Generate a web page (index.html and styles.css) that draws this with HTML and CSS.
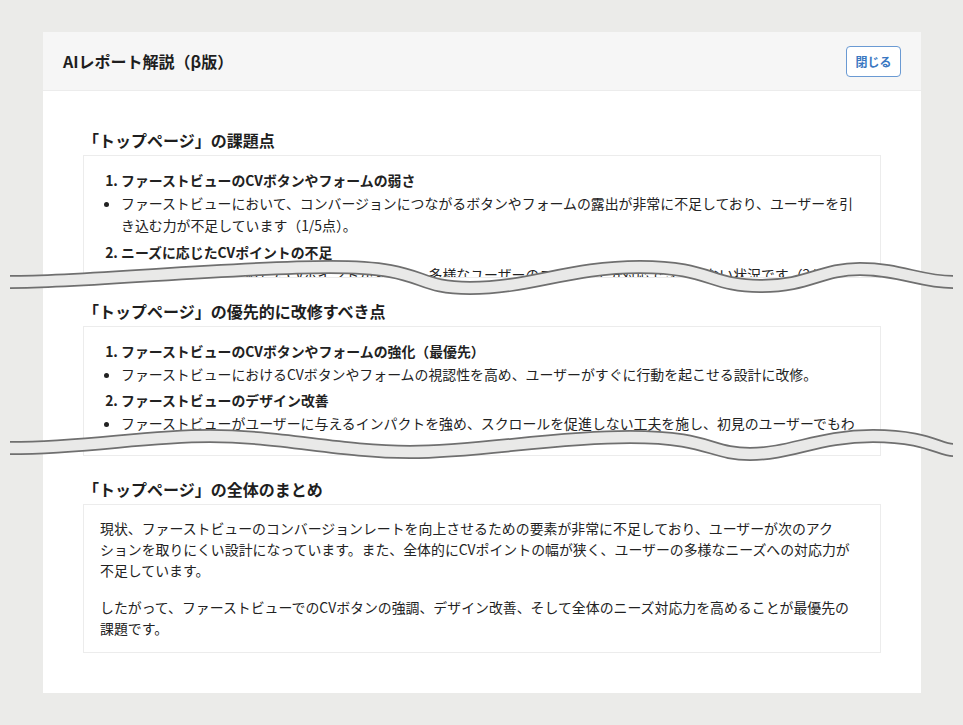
FILE: index.html
```html
<!DOCTYPE html>
<html lang="ja">
<head>
<meta charset="utf-8">
<title>AIレポート解説（β版）</title>
<link rel="stylesheet" href="styles.css">
</head>
<body>
<div class="page">
  <div class="card">
    <div class="card-header">
      <h1 class="card-title">AIレポート解説（β版）</h1>
      <button class="close-btn" type="button">閉じる</button>
    </div>
    <div class="card-body">
      <section class="section">
        <h2 class="section-title">「トップページ」の課題点</h2>
        <div class="box box-cut box-cut-1">
          <ol class="issues">
            <li>ファーストビューのCVボタンやフォームの弱さ
              <ul class="notes"><li>ファーストビューにおいて、コンバージョンにつながるボタンやフォームの露出が非常に不足しており、ユーザーを引き込む力が不足しています（1/5点）。</li></ul>
            </li>
            <li>ニーズに応じたCVポイントの不足
              <ul class="notes"><li>ユーザーのニーズに応じたCVポイントが少なく、多様なユーザーのニーズに十分対応できていない状況です（2/5点）。</li></ul>
            </li>
          </ol>
        </div>
        <svg class="tear tear-1" viewBox="0 0 943 45" width="943" height="45" aria-hidden="true">
          <path class="tear-edge" d="M0,22 C80,22 220,7 320,7 S400,28 460,28 S560,7 630,7 S700,26 750,26 S810,9 850,9 S910,22 943,22"/>
          <path class="tear-fill" d="M0,22 C80,22 220,7 320,7 S400,28 460,28 S560,7 630,7 S700,26 750,26 S810,9 850,9 S910,22 943,22"/>
        </svg>
      </section>

      <section class="section">
        <h2 class="section-title">「トップページ」の優先的に改修すべき点</h2>
        <div class="box box-cut box-cut-2">
          <div class="clip">
            <ol class="issues">
              <li>ファーストビューのCVボタンやフォームの強化（最優先）
                <ul class="notes"><li>ファーストビューにおけるCVボタンやフォームの視認性を高め、ユーザーがすぐに行動を起こせる設計に改修。</li></ul>
              </li>
              <li>ファーストビューのデザイン改善
                <ul class="notes"><li>ファーストビューがユーザーに与えるインパクトを強め、スクロールを促進しない工夫を施し、初見のユーザーでもわかりやすいデザインに改修。</li></ul>
              </li>
            </ol>
          </div>
        </div>
        <svg class="tear tear-2" viewBox="0 0 943 45" width="943" height="45" aria-hidden="true">
          <path class="tear-edge" d="M0,23 C80,23 130,11 200,11 S330,27 400,27 S540,12 620,12 S700,29 740,29 S810,11 863,11 S930,25 943,25"/>
          <path class="tear-fill" d="M0,23 C80,23 130,11 200,11 S330,27 400,27 S540,12 620,12 S700,29 740,29 S810,11 863,11 S930,25 943,25"/>
        </svg>
      </section>

      <section class="section">
        <h2 class="section-title">「トップページ」の全体のまとめ</h2>
        <div class="box summary">
          <p>現状、ファーストビューのコンバージョンレートを向上させるための要素が非常に不足しており、ユーザーが次のアクションを取りにくい設計になっています。また、全体的にCVポイントの幅が狭く、ユーザーの多様なニーズへの対応力が不足しています。</p>
          <p>したがって、ファーストビューでのCVボタンの強調、デザイン改善、そして全体のニーズ対応力を高めることが最優先の課題です。</p>
        </div>
      </section>
    </div>
  </div>
</div>
</body>
</html>
```

FILE: styles.css
```css
* {
  box-sizing: border-box;
}

body {
  margin: 0;
  background: #ebebe9;
  font-family: "Noto Sans CJK JP", "Noto Sans", sans-serif;
  color: #222;
}

.page {
  padding: 32px 42px 33px 43px;
}

.card {
  background: #fff;
}

.card-header {
  height: 59px;
  background: #f6f6f6;
  border-bottom: 1px solid #ececec;
  display: flex;
  align-items: center;
  justify-content: space-between;
  padding: 0 20px;
}

.card-title {
  margin: 0;
  font-size: 16px;
  font-weight: 700;
  color: #1e1e1e;
}

.close-btn {
  width: 55px;
  height: 31px;
  padding: 0;
  background: #fff;
  border: 1px solid #6a9ad3;
  border-radius: 4px;
  color: #3b78c2;
  font-family: "Noto Sans CJK JP", sans-serif;
  font-size: 12px;
  font-weight: 700;
}

.card-body {
  padding: 37px 40px 40px;
}

.section {
  position: relative;
  margin-bottom: 21px;
}

.section:last-child {
  margin-bottom: 0;
}

.section-title {
  margin: 0 0 3px;
  font-size: 16px;
  line-height: 24px;
  font-weight: 700;
  color: #1e1e1e;
}

.box {
  border: 1px solid #ececec;
  padding: 13px 20px 13px 16px;
  font-size: 13.9px;
  line-height: 22.6px;
  line-break: strict;
}

.box-cut {
  overflow: hidden;
}

.box-cut-1 {
  height: 123px;
}

.box-cut-2 {
  height: 130px;
}

.clip {
  height: 100px;
  overflow: hidden;
}

.issues {
  margin: 0;
  padding-left: 21px;
  font-weight: 700;
}

.issues > li + li {
  margin-top: 4px;
}

.notes {
  margin: 0;
  padding-left: 0;
  font-weight: 400;
  list-style: disc;
}

.summary {
  padding: 13px 20px 13px 16px;
  line-height: 21px;
}

.summary p {
  margin: 0 0 16px;
}

.summary p:last-child {
  margin-bottom: 0;
}

.tear {
  position: absolute;
  left: -73px;
  overflow: visible;
}

.tear-1 {
  bottom: -27px;
}

.tear-2 {
  bottom: -14px;
}

.tear-edge {
  fill: none;
  stroke: #6f6f6f;
  stroke-width: 14;
}

.tear-fill {
  fill: none;
  stroke: #e9e9e8;
  stroke-width: 10.5;
}
```
